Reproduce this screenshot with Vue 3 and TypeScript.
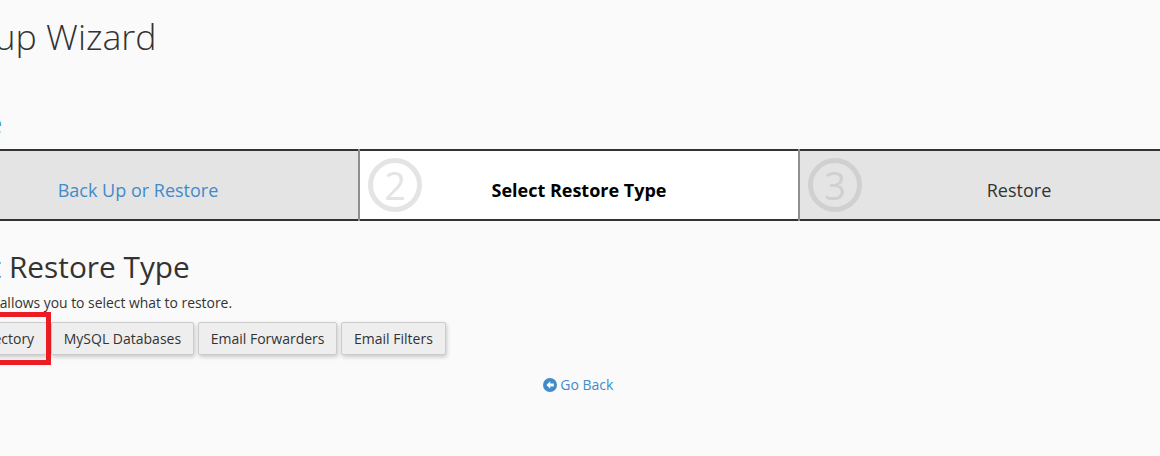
<script setup lang="ts">
const steps = [
  { num: 1, label: 'Back Up or Restore', state: 'done' },
  { num: 2, label: 'Select Restore Type', state: 'active' },
  { num: 3, label: 'Restore', state: 'todo' }
]

const restoreTypes = ['Home Directory', 'MySQL Databases', 'Email Forwarders', 'Email Filters']
</script>

<template>
  <div class="page">
    <h1 class="title">Backup Wizard</h1>
    <a class="intro-link" href="#">Home</a>

    <div class="steps">
      <div v-for="step in steps" :key="step.num" class="step" :class="step.state">
        <span class="num">{{ step.num }}</span>
        <a v-if="step.state === 'done'" href="#" class="label">{{ step.label }}</a>
        <span v-else class="label">{{ step.label }}</span>
      </div>
    </div>

    <h2 class="subtitle">Select Restore Type</h2>
    <p class="desc">This feature allows you to select what to restore.</p>

    <div class="buttons">
      <button v-for="(type, i) in restoreTypes" :key="type" class="btn" :class="{ marked: i === 0 }">
        {{ type }}
      </button>
    </div>

    <div class="back">
      <a href="#">
        <svg width="14" height="14" viewBox="0 0 14 14">
          <circle cx="7" cy="7" r="7" fill="#428bca" />
          <path d="M7.2 3.2 3.4 7l3.8 3.8V8.6h3.6V5.4H7.2z" fill="#fafafa" />
        </svg>
        Go Back
      </a>
    </div>
  </div>
</template>

<style scoped>
.page {
  width: 1320px;
  margin-left: -81px;
  font-family: "Open Sans", sans-serif;
  font-size: 14px;
  color: #333;
}
.title {
  margin: 0;
  padding-top: 11px;
  font-size: 35.7px;
  line-height: 50px;
  font-weight: 300;
  color: #333;
}
.intro-link {
  display: block;
  margin-top: 47px;
  height: 41px;
  font-size: 29.5px;
  line-height: 30px;
  color: #428bca;
  text-decoration: none;
}
.steps {
  display: grid;
  grid-template-columns: repeat(3, 440px);
  border-top: 2px solid #333;
  border-bottom: 2px solid #333;
  height: 72px;
  box-sizing: border-box;
}
.step {
  position: relative;
  display: flex;
  align-items: center;
  justify-content: center;
  padding-top: 10px;
  background: #e4e4e4;
  font-size: 18px;
}
.step.done {
  padding-right: 2px;
}
.step + .step::before {
  content: "";
  position: absolute;
  left: -1px;
  top: -2px;
  bottom: -2px;
  width: 2px;
  background: #8f8f8f;
}
.step.active {
  background: #fff;
  color: #000;
  font-weight: 700;
}
.label {
  color: inherit;
  text-decoration: none;
}
.step.done .label {
  color: #428bca;
}
.num {
  position: absolute;
  left: 9px;
  top: 7px;
  width: 54px;
  height: 54px;
  box-sizing: border-box;
  border: 5px solid #d0d0d0;
  border-radius: 50%;
  display: flex;
  align-items: center;
  justify-content: center;
  color: #d0d0d0;
  font-size: 38px;
  font-weight: 400;
  line-height: 1;
}
.step.active .num {
  border-color: #e4e4e4;
  color: #e4e4e4;
}
.subtitle {
  margin: 27px 0 0;
  font-size: 29.8px;
  line-height: 38px;
  font-weight: 400;
  color: #333;
}
.desc {
  margin: 7px 0 0;
  font-size: 13.9px;
  line-height: 20px;
}
.buttons {
  display: flex;
  gap: 4px;
  margin-top: 9px;
}
.btn {
  height: 33px;
  padding: 0 11.8px;
  font: inherit;
  color: #333;
  background: #eee;
  border: 1px solid #ccc;
  border-radius: 2px;
  box-shadow: 1px 2px 4px rgba(0, 0, 0, 0.2);
  position: relative;
}
.btn.marked {
  margin-left: -1px;
}
.btn.marked::after {
  content: "";
  position: absolute;
  left: -10px;
  right: -5px;
  top: -11px;
  bottom: -11px;
  border: 5px solid #ed1c24;
}
.back {
  margin-top: 20px;
  padding-right: 2px;
  text-align: center;
}
.back a {
  color: #428bca;
  text-decoration: none;
}
.back svg {
  vertical-align: -2px;
}
</style>

<style>
html, body {
  overflow: hidden;
  background: #fafafa;
}
</style>
